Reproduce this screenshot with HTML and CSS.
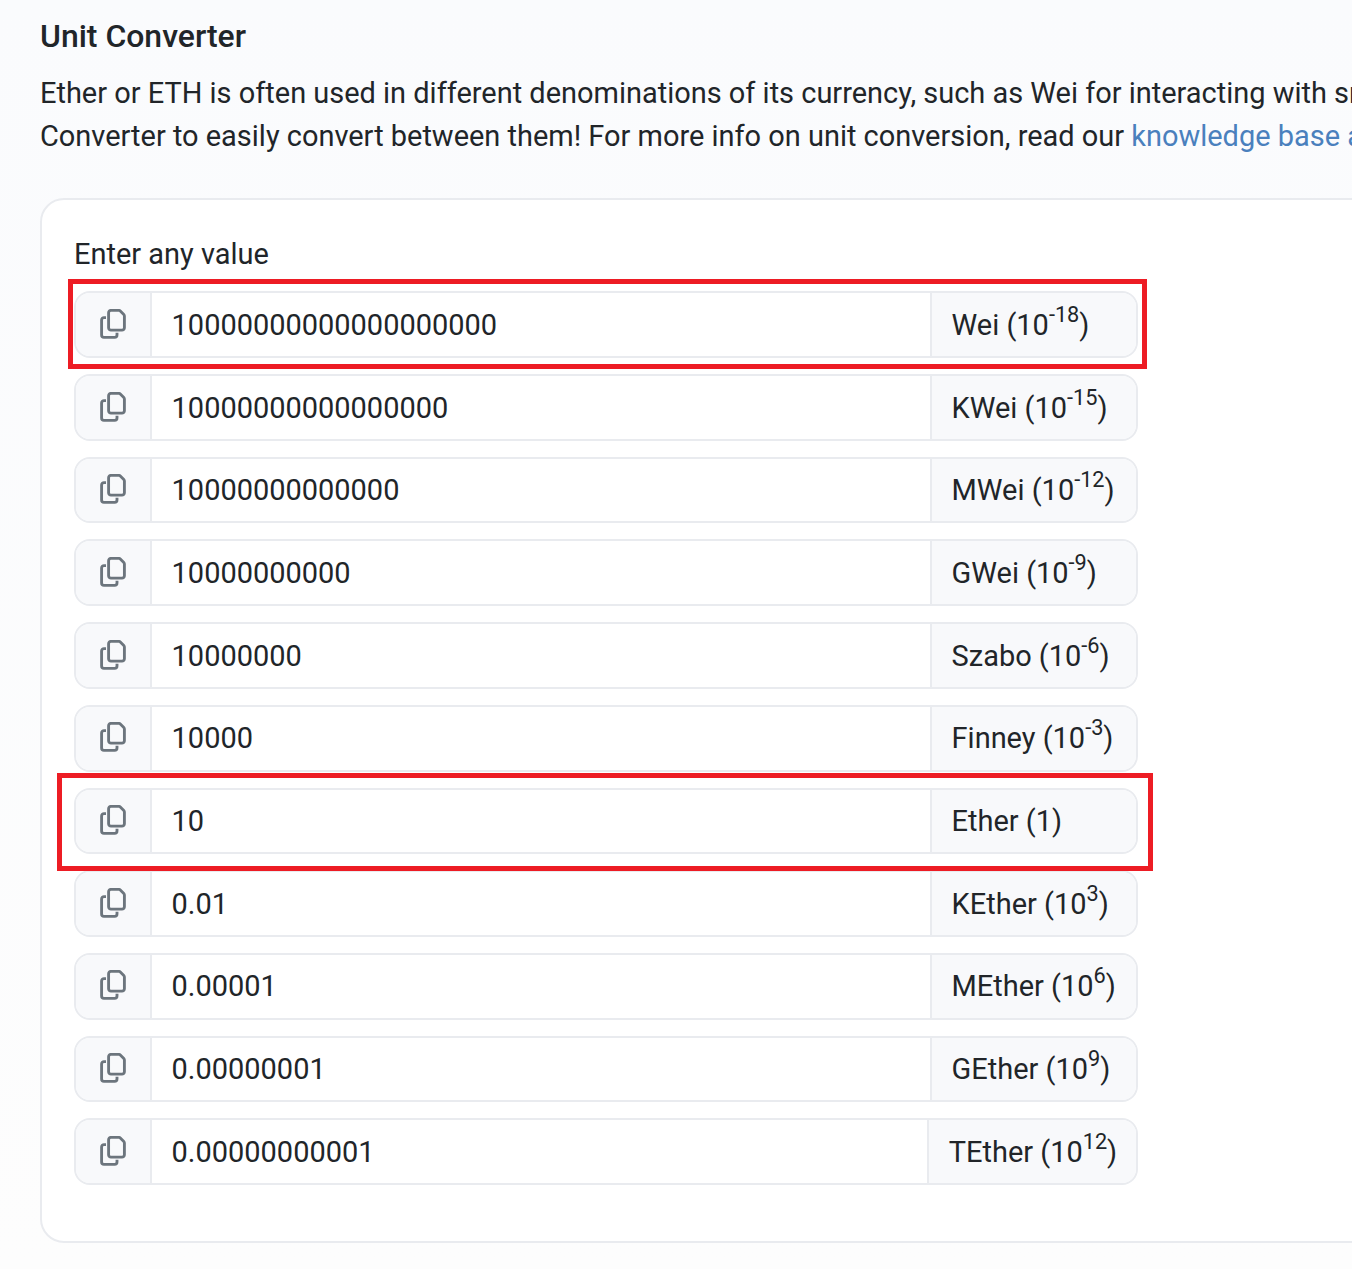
FILE: index.html
```html
<!DOCTYPE html>
<html lang="en">
<head>
<meta charset="utf-8">
<title>Unit Converter</title>
<link rel="stylesheet" href="styles.css">
</head>
<body>
<svg class="sprite" aria-hidden="true">
  <symbol id="copy" viewBox="0 0 26 30">
    <path d="M11 1.4h7.8c.6 0 1.1.2 1.5.6l3.5 3.5c.4.4.6.9.6 1.500V18.700a2.400 2.400 0 0 1-2.400 2.400H11a2.400 2.400 0 0 1-2.400-2.400V3.800A2.400 2.400 0 0 1 11 1.400Z"/>
    <path d="M6 8.600H4a2.400 2.400 0 0 0-2.400 2.400v14.900a2.400 2.400 0 0 0 2.400 2.400h10.600a2.400 2.400 0 0 0 2.400-2.400V23.800"/>
  </symbol>
</svg>
<main class="page">
  <h1 class="title">Unit Converter</h1>
  <p class="intro">Ether or ETH is often used in different denominations of its currency, such as Wei for interacting with smart<br>Converter to easily convert between them! For more info on unit conversion, read our <a class="link">knowledge base article</a></p>
  <section class="card">
    <div class="label">Enter any value</div>
    <div class="rows">
      <div class="row marked marked-wei"><span class="copy"><svg class="icon"><use href="#copy"/></svg></span><span class="value">10000000000000000000</span><span class="unit"><span>Wei (10<sup>-18</sup>)</span></span></div>
      <div class="row"><span class="copy"><svg class="icon"><use href="#copy"/></svg></span><span class="value">10000000000000000</span><span class="unit"><span>KWei (10<sup>-15</sup>)</span></span></div>
      <div class="row"><span class="copy"><svg class="icon"><use href="#copy"/></svg></span><span class="value">10000000000000</span><span class="unit"><span>MWei (10<sup>-12</sup>)</span></span></div>
      <div class="row"><span class="copy"><svg class="icon"><use href="#copy"/></svg></span><span class="value">10000000000</span><span class="unit"><span>GWei (10<sup>-9</sup>)</span></span></div>
      <div class="row"><span class="copy"><svg class="icon"><use href="#copy"/></svg></span><span class="value">10000000</span><span class="unit"><span>Szabo (10<sup>-6</sup>)</span></span></div>
      <div class="row"><span class="copy"><svg class="icon"><use href="#copy"/></svg></span><span class="value">10000</span><span class="unit"><span>Finney (10<sup>-3</sup>)</span></span></div>
      <div class="row marked marked-ether"><span class="copy"><svg class="icon"><use href="#copy"/></svg></span><span class="value">10</span><span class="unit"><span>Ether (1)</span></span></div>
      <div class="row"><span class="copy"><svg class="icon"><use href="#copy"/></svg></span><span class="value">0.01</span><span class="unit"><span>KEther (10<sup>3</sup>)</span></span></div>
      <div class="row"><span class="copy"><svg class="icon"><use href="#copy"/></svg></span><span class="value">0.00001</span><span class="unit"><span>MEther (10<sup>6</sup>)</span></span></div>
      <div class="row"><span class="copy"><svg class="icon"><use href="#copy"/></svg></span><span class="value">0.00000001</span><span class="unit"><span>GEther (10<sup>9</sup>)</span></span></div>
      <div class="row"><span class="copy"><svg class="icon"><use href="#copy"/></svg></span><span class="value">0.00000000001</span><span class="unit"><span>TEther (10<sup>12</sup>)</span></span></div>
    </div>
  </section>
</main>
</body>
</html>
```
FILE: styles.css
```css
* { box-sizing: border-box; }
html { overflow: hidden; }
body {
  margin: 0;
  height: 1269px;
  overflow: hidden;
  background: linear-gradient(#fafbfd, #fdfdfd);
  color: #212529;
  font: 400 28.96px/43.4px Roboto, sans-serif;
}
.sprite { display: none; }
.page { padding: 17px 0 0 40px; }
.title {
  margin: 0 0 16px;
  font-size: 31.95px;
  font-weight: 500;
  line-height: 39px;
}
.intro { height: 87px; margin: 0 0 39px; line-height: 43px; white-space: nowrap; }
.link { color: #4a80bd; }
.card {
  width: 1600px;
  height: 1045px;
  padding: 33px 32px 32px;
  border: 2px solid #e9ebef;
  border-radius: 24px;
  background: #fff;
}
.label { height: 58.4px; }
.rows {
  display: flex;
  flex-direction: column;
  gap: 16px;
  width: 1064px;
}
.row {
  position: relative;
  display: flex;
  height: 66.7px;
  border: 2px solid #e9ebef;
  border-radius: 16px;
  background: #fff;
}
.copy {
  display: flex;
  flex: none;
  align-items: center;
  justify-content: center;
  width: 76px;
  padding-bottom: 1.7px;
  border-right: 2px solid #e9ebef;
  border-radius: 14px 0 0 14px;
  background: #f8f9fb;
}
.icon {
  width: 26px;
  height: 30px;
  fill: none;
  stroke: #6c757d;
  stroke-width: 2.85;
}
.value { flex: 1; padding: 10.48px 19.6px 0; }
.unit {
  flex: none;
  min-width: 206px;
  padding: 10.48px 18.8px 0 19.6px;
  border-left: 2px solid #e9ebef;
  border-radius: 0 14px 14px 0;
  background: #f8f9fb;
}
sup {
  position: relative;
  top: -13px;
  font-size: 0.75em;
  line-height: 0;
  vertical-align: baseline;
}
/* Highlight frames drawn over the rows */
.marked::after {
  content: "";
  position: absolute;
  z-index: 1;
  border: 5px solid #ed1c24;
}
.marked-wei::after { inset: -14px -11px -13px -8px; }
.marked-ether::after { inset: -17px -17px -19px -19px; }
```
